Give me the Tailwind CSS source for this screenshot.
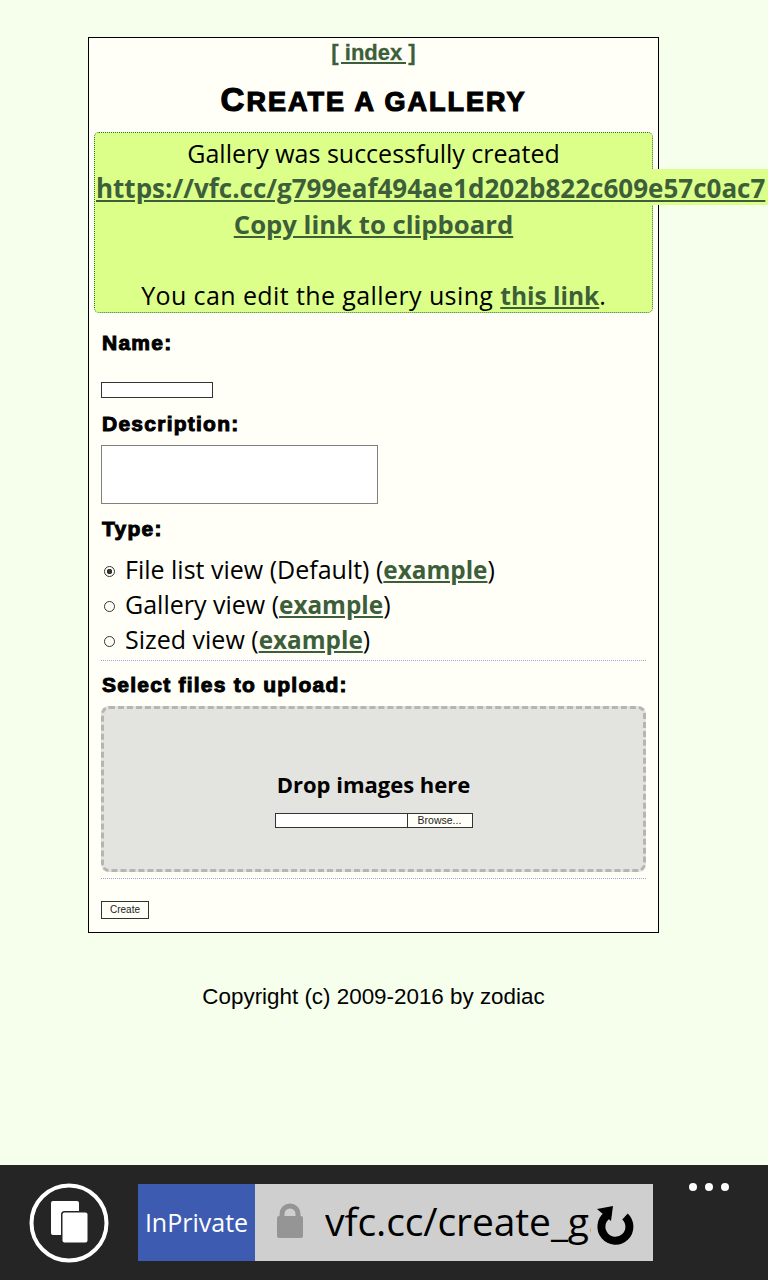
<!DOCTYPE html>
<html lang="en">
<head>
  <meta charset="UTF-8">
  <meta name="viewport" content="width=device-width, initial-scale=1">
  <title>Create a gallery</title>
  <script src="https://cdn.jsdelivr.net/npm/@tailwindcss/browser@4"></script>
</head>
<body class="bg-[#f5ffec] h-screen overflow-hidden flex flex-col font-['Open_Sans',sans-serif] text-black">

  <main class="flex-1 pl-[88px] pt-[37px]">
    <div class="w-[571px] flex flex-col items-center">
      <div class="w-[571px] h-[896px] border border-black bg-[#fffff8] px-[5px]">
        <div class="text-center h-[29px] pt-[2px] font-['Liberation_Sans',sans-serif] font-bold text-[22px] leading-[26px] text-[#3c5f3a] [-webkit-text-stroke:0.3px_#3c5f3a]">
          <a href="#" class="underline">[ index ]</a>
        </div>

        <h1 class="text-center h-[65px] pt-[15px] font-['Liberation_Sans',sans-serif] font-bold text-[27px] leading-[36px] tracking-[2px] [-webkit-text-stroke:1.2px_black]"><span class="text-[33px]">C</span>REATE A GALLERY</h1>

        <div class="w-[559px] h-[181px] border border-dotted border-[#1f7a3f] rounded-[5px] bg-[#dcff8a] text-center text-[25px] leading-[36px]">
          <div class="h-[36px] pt-[2px]">Gallery was successfully created</div>
          <div class="w-[673px] h-[36px] pt-px bg-[#dcff8a] text-left pl-px whitespace-nowrap"><a href="#" class="font-bold text-[26px] underline text-[#3c5f3a]">https://vfc.cc/g799eaf494ae1d202b822c609e57c0ac7</a></div>
          <div class="h-[36px] pt-px"><a href="#" class="font-bold text-[25.7px] underline text-[#3c5f3a]">Copy link to clipboard</a></div>
          <div class="h-[35px]"></div>
          <div class="h-[36px] pt-px"><span class="tracking-[0.4px]">You can edit the gallery using </span><a href="#" class="font-bold text-[24.5px] underline text-[#3c5f3a]">this link</a>.</div>
        </div>

        <form class="px-[7px]">
          <div class="h-[30px] mt-[16px] pl-px font-['Liberation_Sans',sans-serif] font-bold text-[21px] leading-[28px] tracking-[1.25px] [-webkit-text-stroke:1px_black]">Name:</div>
          <input type="text" class="block mt-[23px] w-[112px] h-[16px] border border-[#333] bg-white">
          <div class="h-[30px] mt-[12px] pl-px font-['Liberation_Sans',sans-serif] font-bold text-[21px] leading-[28px] tracking-[1.25px] [-webkit-text-stroke:1px_black]">Description:</div>
          <textarea class="block mt-[5px] w-[277px] h-[59px] border border-[#808080] bg-white resize-none"></textarea>
          <div class="h-[30px] mt-[11px] pl-px font-['Liberation_Sans',sans-serif] font-bold text-[21px] leading-[28px] tracking-[1.25px] [-webkit-text-stroke:1px_black]">Type:</div>

          <div class="mt-[7px] text-[25px] leading-[35px]">
            <label class="flex items-center h-[35px]">
              <input type="radio" name="type" checked class="appearance-none w-[11px] h-[11px] ml-[3px] mr-[10px] mt-[3px] rounded-full border border-[#333] bg-[radial-gradient(circle,#333_0,#333_2.5px,transparent_3px)]">
              <span>File list view (Default) (<a href="#" class="font-bold text-[24.3px] underline text-[#3c5f3a]">example</a>)</span>
            </label>
            <label class="flex items-center h-[35px]">
              <input type="radio" name="type" class="appearance-none w-[11px] h-[11px] ml-[3px] mr-[10px] mt-[3px] rounded-full border border-[#333]">
              <span>Gallery view (<a href="#" class="font-bold text-[24.3px] underline text-[#3c5f3a]">example</a>)</span>
            </label>
            <label class="flex items-center h-[35px]">
              <input type="radio" name="type" class="appearance-none w-[11px] h-[11px] ml-[3px] mr-[10px] mt-[3px] rounded-full border border-[#333]">
              <span>Sized view (<a href="#" class="font-bold text-[24.3px] underline text-[#3c5f3a]">example</a>)</span>
            </label>
          </div>

          <div class="border-t border-dotted border-[#98a6d4] mt-[3px] h-[46px] pt-[10px] pl-px font-['Liberation_Sans',sans-serif] font-bold text-[21px] leading-[28px] tracking-[1.25px] [-webkit-text-stroke:1px_black]">Select files to upload:</div>

          <div class="h-[166px] border-[3px] border-dashed border-[#b5b5b1] rounded-[8px] bg-[#e3e3df] flex flex-col items-center pt-[57px]">
            <div class="font-bold text-[22px] leading-[36px]">Drop images here</div>
            <div class="flex mt-[11px] font-['Liberation_Sans',sans-serif]">
              <div class="w-[133px] h-[15px] border border-[#333] bg-white"></div>
              <button type="button" class="w-[65px] h-[15px] border border-l-0 border-[#333] bg-[#fffff8] text-[10.5px] leading-[13px] text-[#222]">Browse...</button>
            </div>
          </div>

          <div class="border-t border-dotted border-[#98a6d4] mt-[6px] pt-[22px]">
            <button type="submit" class="block w-[48px] h-[18px] border border-[#333] bg-[#fffff8] font-['Liberation_Sans',sans-serif] text-[10px] leading-[16px] text-[#222]">Create</button>
          </div>
        </form>
      </div>

      <p class="mt-[52px] font-['Liberation_Sans',sans-serif] text-[22.4px] leading-[24px] whitespace-nowrap">Copyright (c) 2009-2016 by zodiac</p>
    </div>
  </main>

  <div class="h-[115px] bg-[#252525] flex items-start pt-[19px] overflow-hidden">
    <div class="w-[138px] flex justify-center -mt-[1px] pr-[1px]">
      <svg width="80" height="80" viewBox="0 0 80 80">
        <circle cx="40" cy="40" r="37.5" fill="none" stroke="#fff" stroke-width="4"/>
        <rect x="22" y="18" width="28" height="34" rx="2" fill="#fff"/>
        <rect x="33.5" y="29.5" width="25" height="30" rx="2" fill="#fff" stroke="#252525" stroke-width="3" paint-order="stroke"/>
      </svg>
    </div>
    <div class="w-[117px] h-[77px] bg-[#3e5bb2] text-white text-[25px] leading-[77px] text-center">InPrivate</div>
    <div class="w-[398px] h-[77px] bg-[#cfcfcf] flex items-center">
      <svg class="ml-[21px] mb-[3px] shrink-0" width="28" height="36" viewBox="0 0 28 36">
        <path d="M6 14V11a8 8 0 0 1 16 0v3" fill="none" stroke="#959595" stroke-width="5"/>
        <rect x="1" y="13" width="26" height="22" rx="2" fill="#959595"/>
      </svg>
      <div class="ml-[21px] w-[266px] overflow-hidden whitespace-nowrap text-[39px] leading-[73px] mb-[4px] tracking-[-0.1px]">vfc.cc/create_gallery</div>
      <svg class="-ml-px shrink-0" width="52" height="52" viewBox="0 0 52 52">
        <path d="M35 19.5A14 14 0 1 1 17 18.5" fill="none" stroke="#000" stroke-width="8"/>
        <path d="M7 12L23 9L21 24z" fill="#000"/>
      </svg>
    </div>
    <div class="flex gap-[8px] ml-[36px] -mt-[1px]">
      <span class="w-[8px] h-[8px] rounded-full bg-white"></span>
      <span class="w-[8px] h-[8px] rounded-full bg-white"></span>
      <span class="w-[8px] h-[8px] rounded-full bg-white"></span>
    </div>
  </div>
</body>
</html>
